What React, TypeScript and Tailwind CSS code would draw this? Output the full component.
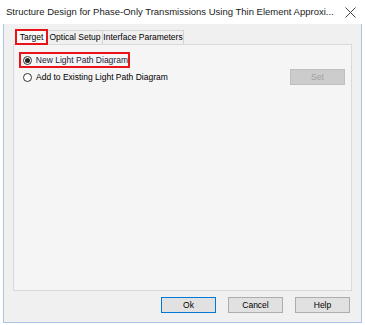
export default function App() {
  const font = { fontFamily: '"Liberation Sans", Arial, sans-serif' };

  return (
    <div className="w-[365px] h-[325px] bg-white flex flex-col text-[8.5px] text-black" style={font}>
      {/* title bar */}
      <div className="h-[24px] flex items-center pl-[6px] pr-[8px] shrink-0">
        <div className="flex-1 whitespace-nowrap overflow-hidden text-[9.5px] text-[#1a1a1a]">
          Structure Design for Phase-Only Transmissions Using Thin Element Approxi...
        </div>
        <svg width="11" height="11" viewBox="0 0 11 11" className="ml-[8px] mr-[1px]">
          <path d="M0.5 0.5L10.5 10.5M10.5 0.5L0.5 10.5" stroke="#444" strokeWidth="1" />
        </svg>
      </div>

      {/* body */}
      <div className="mx-[3px] mb-[2px] flex-1 bg-[#f0f0f0] border-x border-b border-[#a9c5e8] flex flex-col pl-[9px] pr-[9px] pt-[5px]">
        {/* tabs */}
        <div className="flex items-end h-[15px] pl-[2px] relative z-10">
          <div className="h-[16px] w-[33px] flex items-center justify-center bg-[#fafafa] border-2 border-[#e8141a] -mb-[1px]">
            <span className="leading-none">Target</span>
          </div>
          <div className="h-[14px] w-[55px] flex items-center justify-center border border-l-0 border-b-0 border-[#d4d4d4] bg-[#f0f0f0]">
            Optical Setup
          </div>
          <div className="h-[14px] w-[81px] flex items-center justify-center border border-l-0 border-b-0 border-[#d4d4d4] bg-[#f0f0f0]">
            Interface Parameters
          </div>
        </div>

        {/* panel */}
        <div className="h-[247px] bg-[#f5f5f5] border border-[#d9d9d9] flex flex-col pl-[5px] pr-[6px] pt-[7px]">
          <div className="flex items-start justify-between">
            <div className="flex flex-col gap-[1px]">
              <div className="h-[16px] w-[111px] border-2 border-[#e8141a] flex items-center pl-[2px] gap-[4px]">
                <span className="w-[9px] h-[9px] rounded-full border border-[#333] bg-white flex items-center justify-center">
                  <span className="w-[5px] h-[5px] rounded-full bg-[#222]" />
                </span>
                <span className="text-[#1a1a3a] whitespace-nowrap">New Light Path Diagram</span>
              </div>
              <div className="h-[16px] flex items-center pl-[4px] gap-[4px]">
                <span className="w-[9px] h-[9px] rounded-full border border-[#333] bg-white" />
                <span className="whitespace-nowrap">Add to Existing Light Path Diagram</span>
              </div>
            </div>
            <div className="mt-[17px] w-[55px] h-[16px] bg-[#cccccc] border border-[#bfbfbf] flex items-center justify-center text-[#a0a0a0]">
              Set
            </div>
          </div>
        </div>

        {/* buttons */}
        <div className="flex justify-end gap-[12px] pr-[2px] mt-[6px]">
          <div className="w-[55px] h-[16px] bg-[#e1e1e1] border border-[#0078d7] flex items-center justify-center">Ok</div>
          <div className="w-[55px] h-[16px] bg-[#e1e1e1] border border-[#adadad] flex items-center justify-center">Cancel</div>
          <div className="w-[55px] h-[16px] bg-[#e1e1e1] border border-[#adadad] flex items-center justify-center">Help</div>
        </div>
      </div>
    </div>
  );
}
